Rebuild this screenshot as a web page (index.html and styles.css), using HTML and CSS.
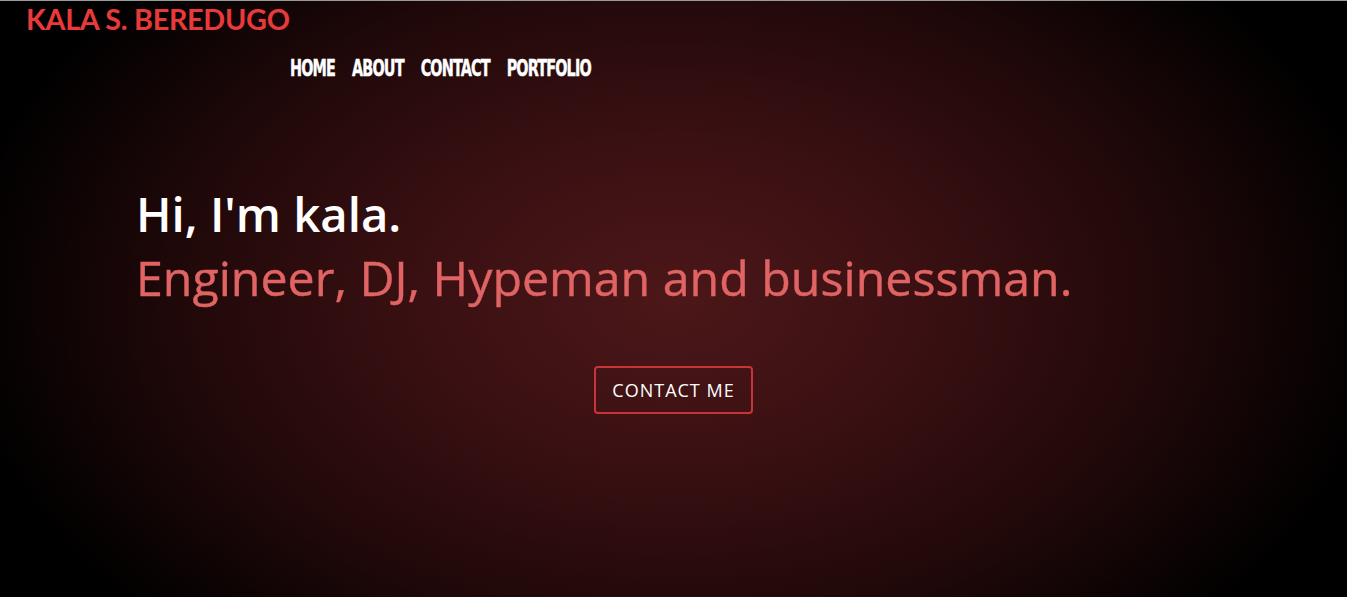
FILE: index.html
```html
<!DOCTYPE html>
<html>
<head>
<meta charset="utf-8">
<link rel="stylesheet" href="styles.css">
</head>
<body>
<div class="page">
  <header class="header">
    <div class="brand">KALA S. BEREDUGO</div>
    <nav class="nav">
      <a href="#">HOME</a>
      <a href="#">ABOUT</a>
      <a href="#">CONTACT</a>
      <a href="#">PORTFOLIO</a>
    </nav>
  </header>
  <main class="hero">
    <h1 class="hello">Hi, I'm kala.</h1>
    <h2 class="roles">Engineer, DJ, Hypeman and businessman.</h2>
    <div class="cta-row">
      <a class="cta" href="#">CONTACT ME</a>
    </div>
  </main>
</div>
</body>
</html>
```

FILE: styles.css
```css
html, body {
  margin: 0;
  padding: 0;
  height: 100%;
  background: #000;
}
.page {
  height: 597px;
  box-sizing: border-box;
  border-top: 1px solid #9a9a9a;
  background: radial-gradient(ellipse 720px 470px at 50% 50%, #4c1719 0%, #3a1012 35%, #1f0809 70%, #000 100%);
  overflow: hidden;
}
.header {
  padding: 2px 0 0 26px;
}
.brand {
  font-family: Lato, "Liberation Sans", sans-serif;
  font-weight: 700;
  font-size: 28.8px;
  line-height: 32px;
  color: #e83a3a;
  letter-spacing: -0.3px;
}
.nav {
  display: flex;
  gap: 17px;
  padding: 22px 0 0 264px;
}
.nav a {
  display: inline-block;
  font-family: "DejaVu Sans", sans-serif;
  font-stretch: condensed;
  font-weight: 700;
  font-size: 16px;
  line-height: 24px;
  letter-spacing: -0.85px;
  color: #fff;
  text-decoration: none;
  transform: scaleY(1.45);
  -webkit-text-stroke: 0.3px #fff;
}
.hero {
  padding: 105px 0 0 136px;
}
.hello {
  margin: 0;
  font-family: "Open Sans", "Noto Sans", sans-serif;
  font-weight: 600;
  font-size: 47.3px;
  line-height: 56px;
  color: #fff;
}
.roles {
  margin: 5px 0 0;
  font-family: "Open Sans", "Noto Sans", sans-serif;
  font-weight: 400;
  font-size: 48.3px;
  line-height: 60px;
  color: #e06464;
  -webkit-text-stroke: 0.4px #e06464;
}
.cta-row {
  display: flex;
  justify-content: center;
  padding: 59px 136px 0 0;
}
.cta {
  display: inline-block;
  box-sizing: border-box;
  width: 159px;
  height: 48px;
  line-height: 44px;
  text-align: center;
  border: 2px solid #c93436;
  border-radius: 4px;
  color: #fff;
  font-family: "Open Sans", "Noto Sans", sans-serif;
  font-size: 18px;
  letter-spacing: 1px;
  text-decoration: none;
}
```
